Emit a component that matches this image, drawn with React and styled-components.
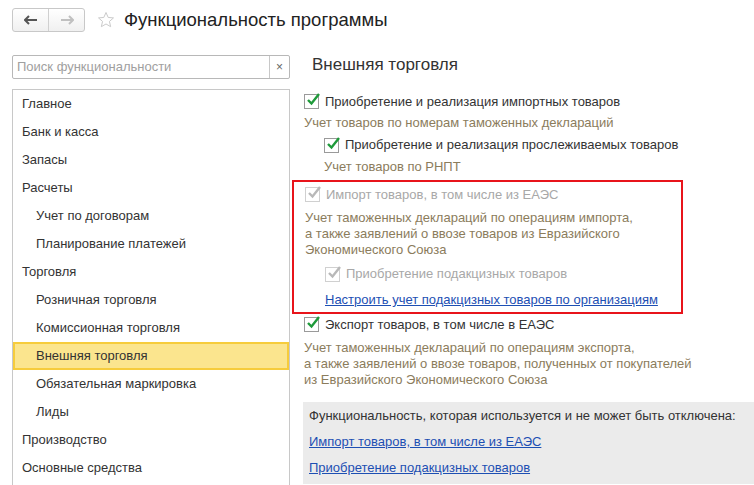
import styled, { createGlobalStyle } from 'styled-components'

const GlobalStyle = createGlobalStyle`
  html, body { margin: 0; background: #fff; }
  body { font-family: "Liberation Sans", Arial, sans-serif; font-size: 13px; color: #333; overflow: hidden; }
`

const Page = styled.div`
  height: 485px;
  overflow: hidden;
`

const Header = styled.div`
  display: flex;
  align-items: center;
  padding: 8px 12px 0;
  height: 24px;
`

const NavGroup = styled.div`
  display: flex;
  border: 1px solid #c8c8c8;
  border-radius: 3px;
  background: linear-gradient(#fff, #f0f0f0);
  height: 22px;
`

const NavBtn = styled.div`
  width: 35px;
  display: flex;
  align-items: center;
  justify-content: center;
  color: ${p => (p.$off ? '#c0c0c0' : '#555')};
  & + & { border-left: 1px solid #d0d0d0; }
`

const Title = styled.div`
  font-size: 18.5px;
  color: #222;
  margin-left: 9px;
`

const Body = styled.div`
  display: grid;
  grid-template-columns: 278px 1fr;
  column-gap: 14px;
  padding: 23px 0 0 12px;
`

const Left = styled.div`
  display: flex;
  flex-direction: column;
  gap: 10px;
`

const Search = styled.div`
  display: flex;
  height: 22px;
  border: 1px solid #b8b8b8;
  border-radius: 2px;
`

const SearchText = styled.div`
  flex: 1;
  padding: 0 4px;
  line-height: 22px;
  color: #a0a0a0;
`

const Clear = styled.div`
  width: 19px;
  border-left: 1px solid #c8c8c8;
  display: flex;
  align-items: center;
  justify-content: center;
  color: #666;
  font-size: 12px;
`

const List = styled.div`
  border: 1px solid #c8c8c8;
  border-bottom: none;
  height: 400px;
`

const Item = styled.div`
  height: 28px;
  line-height: 28px;
  padding-left: ${p => (p.$sub ? 23 : 9)}px;
  ${p => p.$active && `
    background: #fbe58e;
    box-shadow: inset 0 0 0 2px #f6cc3c;
  `}
`

const Right = styled.div`
  display: flex;
  flex-direction: column;
`

const Heading = styled.div`
  font-size: 17px;
  color: #333;
  margin: 0 0 16px 8px;
`

const Options = styled.div`
  display: flex;
  flex-direction: column;
  padding-left: 0;
`

const Check = styled.label`
  display: flex;
  align-items: center;
  gap: 6px;
  height: 20px;
  margin-left: ${p => p.$indent || 0}px;
  color: ${p => (p.$disabled ? '#a8a8a8' : '#333')};
`

const Box = styled.span`
  width: 13px;
  height: 13px;
  border: 1px solid ${p => (p.$disabled ? '#d0d0d0' : '#9a9a9a')};
  background: #fff;
  position: relative;
  svg { position: absolute; left: 0; top: -3px; }
`

const Desc = styled.div`
  color: #8b7c5c;
  line-height: 16px;
  margin: ${p => p.$m || '4px 0 0'};
  margin-left: ${p => p.$indent || 0}px;
`

const Highlight = styled.div`
  margin-left: -12px;
  padding: 2px 0 4px 11px;
  width: 376px;
  border: 2px solid #e8141b;
  display: flex;
  flex-direction: column;
  margin-top: 5px;
`

const Link = styled.a`
  color: #1d4fb3;
  text-decoration: underline;
  cursor: pointer;
`

const Gray = styled.div`
  background: #ebebeb;
  margin: 14px 0 0 -1px;
  padding: 6px 6px 8px;
  display: flex;
  flex-direction: column;
  gap: 10px;
  line-height: 16px;
  color: #333;
`

const Tick = ({ disabled }) => (
  <svg width="16" height="16" viewBox="0 0 16 16">
    <path d="M3 8 L6.5 11.5 L14 2" fill="none" stroke={disabled ? '#b8b8b8' : '#1e9a3a'} strokeWidth="2.4" />
  </svg>
)

const CheckItem = ({ children, disabled, indent }) => (
  <Check $disabled={disabled} $indent={indent}>
    <Box $disabled={disabled}><Tick disabled={disabled} /></Box>
    {children}
  </Check>
)

const items = [
  ['Главное'], ['Банк и касса'], ['Запасы'], ['Расчеты'],
  ['Учет по договорам', 1], ['Планирование платежей', 1], ['Торговля'],
  ['Розничная торговля', 1], ['Комиссионная торговля', 1], ['Внешняя торговля', 1, 1],
  ['Обязательная маркировка', 1], ['Лиды', 1], ['Производство'], ['Основные средства'],
]

export default function App () {
  return (
    <>
      <GlobalStyle />
      <Page>
        <Header>
          <NavGroup>
            <NavBtn>
              <svg width="14" height="10" viewBox="0 0 14 10"><path d="M1 5h12M5 1L1 5l4 4" fill="none" stroke="currentColor" strokeWidth="2" /></svg>
            </NavBtn>
            <NavBtn $off>
              <svg width="14" height="10" viewBox="0 0 14 10"><path d="M1 5h12M9 1l4 4-4 4" fill="none" stroke="currentColor" strokeWidth="2" /></svg>
            </NavBtn>
          </NavGroup>
          <svg style={{ marginLeft: 12 }} width="18" height="18" viewBox="0 0 24 24">
            <path d="M12 2l2.9 6.6 7.1.6-5.4 4.7 1.6 7L12 17.3 5.8 20.9l1.6-7L2 9.2l7.1-.6z" fill="none" stroke="#c8c8c8" strokeWidth="1.3" />
          </svg>
          <Title>Функциональность программы</Title>
        </Header>
        <Body>
          <Left>
            <Search>
              <SearchText>Поиск функциональности</SearchText>
              <Clear>×</Clear>
            </Search>
            <List>
              {items.map(([t, sub, act]) => (
                <Item key={t} $sub={sub} $active={act}>{t}</Item>
              ))}
            </List>
          </Left>
          <Right>
            <Heading>Внешняя торговля</Heading>
            <Options>
              <CheckItem>Приобретение и реализация импортных товаров</CheckItem>
              <Desc>Учет товаров по номерам таможенных деклараций</Desc>
              <Desc $m="4px 0 0">
                <CheckItem indent={20}>Приобретение и реализация прослеживаемых товаров</CheckItem>
              </Desc>
              <Desc $indent={20}>Учет товаров по РНПТ</Desc>
              <Highlight>
                <CheckItem disabled>Импорт товаров, в том числе из ЕАЭС</CheckItem>
                <Desc $m="6px 0 0">Учет таможенных деклараций по операциям импорта,<br />а также заявлений о ввозе товаров из Евразийского<br />Экономического Союза</Desc>
                <Desc $m="6px 0 0"><CheckItem disabled indent={20}>Приобретение подакцизных товаров</CheckItem></Desc>
                <Desc $m="8px 0 0" $indent={20}><Link>Настроить учет подакцизных товаров по организациям</Link></Desc>
              </Highlight>
              <CheckItem>Экспорт товаров, в том числе в ЕАЭС</CheckItem>
              <Desc $m="6px 0 0">Учет таможенных деклараций по операциям экспорта,<br />а также заявлений о ввозе товаров, полученных от покупателей<br />из Евразийского Экономического Союза</Desc>
              <Gray>
                <div>Функциональность, которая используется и не может быть отключена:</div>
                <Link>Импорт товаров, в том числе из ЕАЭС</Link>
                <Link>Приобретение подакцизных товаров</Link>
              </Gray>
            </Options>
          </Right>
        </Body>
      </Page>
    </>
  )
}
